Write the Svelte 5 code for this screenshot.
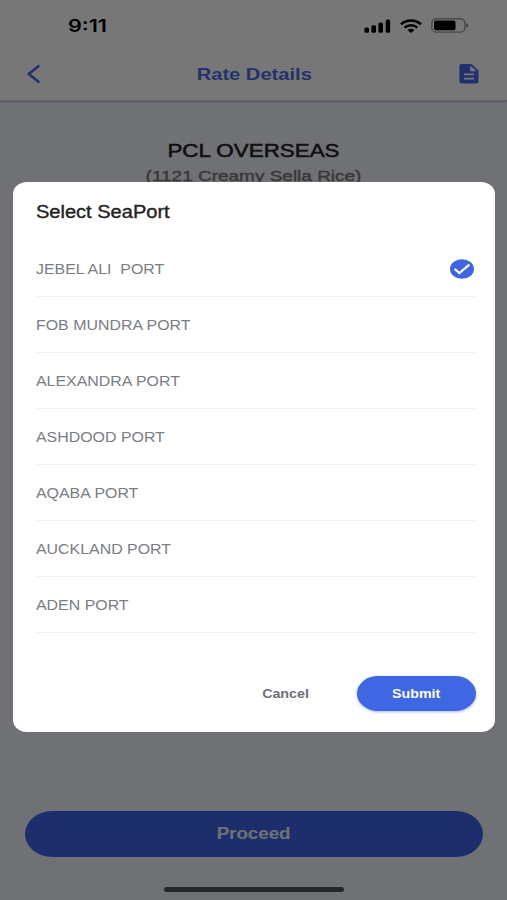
<script lang="ts">
  const ports = [
    'JEBEL ALI  PORT',
    'FOB MUNDRA PORT',
    'ALEXANDRA PORT',
    'ASHDOOD PORT',
    'AQABA PORT',
    'AUCKLAND PORT',
    'ADEN PORT',
  ]

  let selected = $state('JEBEL ALI  PORT')
</script>

<div class="screen">
  <div class="page">
    <header class="header">
      <div class="status-bar">
        <span class="time">9:11</span>
        <div class="status-icons">
          <svg class="signal" width="27" height="14" viewBox="0 0 27 14">
            <rect x="0.4" y="8.5" width="4.6" height="5.3" rx="1.5" />
            <rect x="7.4" y="6.2" width="4.6" height="7.6" rx="1.5" />
            <rect x="14.4" y="3.4" width="4.6" height="10.4" rx="1.5" />
            <rect x="21.7" y="0.4" width="4.4" height="13.4" rx="1.5" />
          </svg>
          <svg class="wifi" width="22" height="14" viewBox="0 0 22 14" fill="none" stroke="#000">
            <path d="M1 5.2C6.8 .1 15.2 .1 21 5.2" stroke-width="2.5" />
            <path d="M4.5 8.7C8.3 5.4 13.7 5.4 17.5 8.7" stroke-width="2.4" />
            <path d="M7.4 11.1Q11 8.4 14.6 11.1L11 14Z" fill="#000" stroke="none" />
          </svg>
          <svg class="battery" width="38" height="15" viewBox="0 0 38 15">
            <rect x="0.8" y="0.7" width="33" height="13.4" rx="4.2" fill="none" stroke="#000" stroke-opacity=".38" stroke-width="1.4" />
            <rect x="3" y="2.5" width="21.5" height="9.8" rx="2" />
            <path d="M35.2 5v5c1.1-.4 1.8-1.4 1.8-2.500s-.7-2.100-1.800-2.500z" fill-opacity=".5" />
          </svg>
        </div>
      </div>
      <div class="nav-bar">
        <svg class="back" width="14" height="20" viewBox="0 0 14 20">
          <path d="M12.3 1.500L1.800 10l10.500 8.500" fill="none" stroke="#4268ec" stroke-width="2.500" />
        </svg>
        <h1 class="nav-title">Rate Details</h1>
        <svg class="doc" width="20" height="20" viewBox="0 0 20 20">
          <path fill="#4268ec" fill-rule="evenodd" d="M2.500 0H12.500L19.500 6.500V17.800Q19.500 19.600 17.400 19.600H2.500Q.4 19.600.4 17.800V1.800Q.4 0 2.500 0ZM11.200 1.600V7.200H17.600ZM5 9.600V11.200H15V9.600ZM5 13.800V15.400H15V13.800Z" />
        </svg>
      </div>
    </header>

    <main class="content">
      <h2 class="company">PCL OVERSEAS</h2>
      <p class="product">(1121 Creamy Sella Rice)</p>
    </main>

    <footer class="footer">
      <button class="proceed"><span>Proceed</span></button>
      <div class="home-indicator"></div>
    </footer>
  </div>

  <div class="overlay">
    <div class="modal">
      <h3 class="modal-title">Select SeaPort</h3>
      <ul class="port-list">
        {#each ports as port}
          <li>
            <button class="port" onclick={() => (selected = port)}>
              <span class="port-name">{port}</span>
              {#if selected === port}
                <svg width="24" height="20" viewBox="0 0 24 20">
                  <ellipse cx="12" cy="10" rx="12" ry="9.8" fill="#3d65e2" />
                  <path d="M4.600 9.900l4.800 4.100L19.300 5.600" fill="none" stroke="#fff" stroke-width="2.200" />
                </svg>
              {/if}
            </button>
          </li>
        {/each}
      </ul>
      <div class="actions">
        <button class="cancel"><span>Cancel</span></button>
        <button class="submit"><span>Submit</span></button>
      </div>
    </div>
  </div>
</div>

<style>
  :global(body) {
    background: #6f7175;
  }

  .screen {
    position: relative;
    width: 507px;
    height: 900px;
    overflow: hidden;
    font-family: "Liberation Sans", Arial, sans-serif;
  }

  h1, h2, h3, p, ul {
    margin: 0;
    padding: 0;
    white-space: nowrap;
  }

  button {
    border: none;
    background: none;
    padding: 0;
    font-family: inherit;
    cursor: pointer;
  }

  .page {
    display: flex;
    flex-direction: column;
    height: 100%;
    background: #edf0f8;
  }

  .header {
    height: 100px;
    background: #fdfdfd;
    border-bottom: 1px solid #cdd2dc;
    box-shadow: 0 1px 2px rgba(60, 75, 100, 0.35);
  }

  .status-bar {
    display: flex;
    align-items: center;
    justify-content: space-between;
    height: 50px;
    padding: 1px 38px 0 68px;
    box-sizing: border-box;
  }

  .time {
    font-family: Inter, sans-serif;
    font-size: 17px;
    font-weight: 600;
    transform: scaleX(1.27);
    transform-origin: left;
  }

  .status-icons {
    display: flex;
    align-items: center;
  }

  .wifi {
    margin: 0 9px 0 9px;
  }

  .nav-bar {
    display: flex;
    align-items: center;
    height: 48px;
    padding: 0 28px 0 27px;
  }

  .nav-title {
    flex: 1;
    padding-left: 7px;
    text-align: center;
    font-size: 16.5px;
    font-weight: 700;
    color: #4a6ce0;
    transform: scaleX(1.22);
  }

  .content {
    flex: 1;
    text-align: center;
    padding-top: 39px;
  }

  .company {
    font-size: 18.5px;
    line-height: 22px;
    font-weight: 400;
    color: #222;
    -webkit-text-stroke: 0.5px #222;
    transform: scaleX(1.21);
  }

  .product {
    margin-top: 4px;
    font-size: 15px;
    line-height: 20px;
    color: #777;
    -webkit-text-stroke: 0.4px #777;
    transform: scaleX(1.265);
  }

  .footer {
    display: flex;
    flex-direction: column;
    align-items: center;
    padding: 0 24px 8px 25px;
  }

  .proceed {
    width: 100%;
    height: 46px;
    border-radius: 27px / 23px;
    background: #3d63e4;
    color: #eef0f6;
    font-size: 16px;
    font-weight: 700;
  }

  .proceed span {
    display: inline-block;
    transform: scaleX(1.17);
  }

  .home-indicator {
    width: 180px;
    height: 5px;
    margin-top: 30px;
    border-radius: 3px;
    background: #505356;
  }

  .overlay {
    position: absolute;
    inset: 0;
    display: flex;
    padding: 181.5px 12px 168px 12.5px;
    background: rgba(0, 0, 0, 0.53);
  }

  .modal {
    flex: 1;
    display: flex;
    flex-direction: column;
    padding: 18.5px 19px 21px 23.5px;
    border-radius: 14px / 12px;
    background: #fff;
  }

  .modal-title {
    font-size: 17.5px;
    line-height: 24px;
    font-weight: 400;
    color: #222;
    -webkit-text-stroke: 0.35px #222;
    transform: scaleX(1.145);
    transform-origin: left;
  }

  .port-list {
    list-style: none;
    margin-top: 16.5px;
  }

  .port {
    display: flex;
    align-items: center;
    justify-content: space-between;
    width: 100%;
    height: 56px;
    padding: 1px 2px 0 0;
    border-bottom: 1px solid #f1f1f3;
  }

  .port-name {
    font-size: 14.2px;
    color: #7a7d84;
    white-space: pre;
    transform: scaleX(1.122);
    transform-origin: left;
  }

  .actions {
    display: flex;
    justify-content: flex-end;
    align-items: center;
    margin-top: auto;
  }

  .actions span {
    display: inline-block;
    transform: scaleX(1.14);
  }

  .cancel {
    margin-right: 51px;
    font-size: 12.5px;
    font-weight: 700;
    color: #6c6f77;
  }

  .submit {
    width: 119px;
    height: 35px;
    border-radius: 21px / 17.5px;
    background: #3f66e3;
    box-shadow: 0 1px 3px rgba(63, 102, 227, 0.45);
    font-size: 12.5px;
    font-weight: 700;
    color: #fff;
  }
</style>
